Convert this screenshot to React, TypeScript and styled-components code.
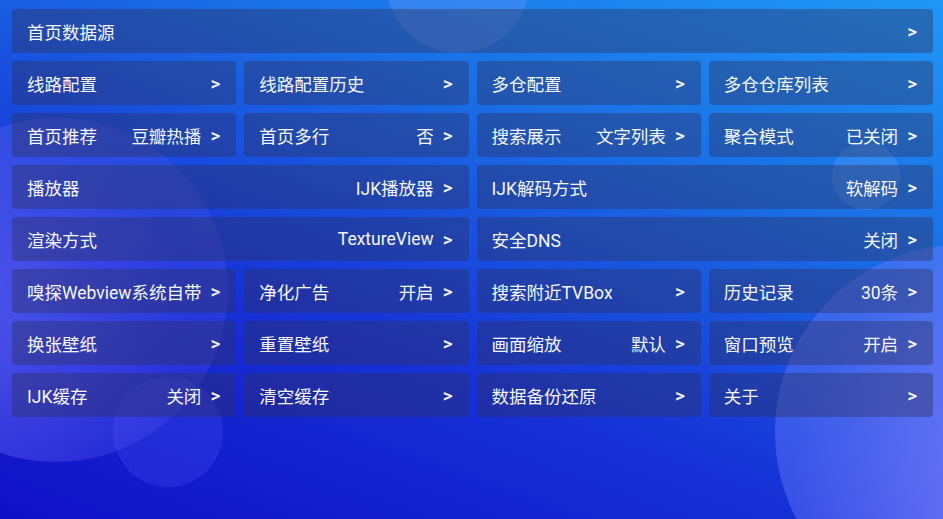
import React from 'react';
import styled, { createGlobalStyle } from 'styled-components';

interface Item {
    label: string;
    value?: string;
    span?: number;
}

const items: Item[] = [
    { label: '首页数据源', span: 4 },
    { label: '线路配置' },
    { label: '线路配置历史' },
    { label: '多仓配置' },
    { label: '多仓仓库列表' },
    { label: '首页推荐', value: '豆瓣热播' },
    { label: '首页多行', value: '否' },
    { label: '搜索展示', value: '文字列表' },
    { label: '聚合模式', value: '已关闭' },
    { label: '播放器', value: 'IJK播放器', span: 2 },
    { label: 'IJK解码方式', value: '软解码', span: 2 },
    { label: '渲染方式', value: 'TextureView', span: 2 },
    { label: '安全DNS', value: '关闭', span: 2 },
    { label: '嗅探Webview系统自带' },
    { label: '净化广告', value: '开启' },
    { label: '搜索附近TVBox' },
    { label: '历史记录', value: '30条' },
    { label: '换张壁纸' },
    { label: '重置壁纸' },
    { label: '画面缩放', value: '默认' },
    { label: '窗口预览', value: '开启' },
    { label: 'IJK缓存', value: '关闭' },
    { label: '清空缓存' },
    { label: '数据备份还原' },
    { label: '关于' },
];

const GlobalStyle = createGlobalStyle`
    html, body {
        margin: 0;
        padding: 0;
        overflow: hidden;
    }
    body {
        font-family: Roboto, "Noto Sans CJK SC", sans-serif;
    }
`;

const Screen = styled.div`
    position: relative;
    width: 943px;
    height: 519px;
    overflow: hidden;
    background: linear-gradient(200deg, #1f98f6 0%, #1a6fe6 30%, #1630d6 65%, #1010c6 100%);
`;

// decorative circles painted behind the menu
const Bubble = styled.div<{ $x: number; $y: number; $r: number; $bg: string }>`
    position: absolute;
    left: ${(p) => p.$x - p.$r}px;
    top: ${(p) => p.$y - p.$r}px;
    width: ${(p) => p.$r * 2}px;
    height: ${(p) => p.$r * 2}px;
    border-radius: 50%;
    background: ${(p) => p.$bg};
    pointer-events: none;
`;

const Grid = styled.div`
    position: relative;
    display: grid;
    grid-template-columns: repeat(4, 1fr);
    grid-auto-rows: 44px;
    gap: 8px;
    padding: 9px 10px 0 12px;
`;

const Tile = styled.div<{ $span: number }>`
    grid-column: span ${(p) => p.$span};
    display: flex;
    align-items: center;
    padding: 0 16px 0 15px;
    border-radius: 4px;
    background: rgba(48, 48, 92, 0.4);
    color: #f4f6fc;
    font-size: 17.5px;
    white-space: nowrap;
`;

const Label = styled.span`
    flex: 1;
`;

const Value = styled.span`
    margin-right: 9px;
`;

const Arrow = styled.span`
    font-size: 19px;
    font-weight: 500;
    line-height: 1;
`;

export default function App() {
    return (
        <>
            <GlobalStyle />
            <Screen>
                <Bubble $x={458} $y={-19} $r={72} $bg="rgba(120, 160, 255, 0.28)" />
                <Bubble
                    $x={56}
                    $y={290}
                    $r={172}
                    $bg="radial-gradient(circle at 20% 55%, rgba(120, 120, 255, 0.6), rgba(90, 90, 240, 0.25) 70%)"
                />
                <Bubble $x={168} $y={432} $r={55} $bg="rgba(90, 90, 255, 0.22)" />
                <Bubble $x={866} $y={176} $r={34} $bg="rgba(140, 180, 255, 0.2)" />
                <Bubble
                    $x={962}
                    $y={432}
                    $r={187}
                    $bg="radial-gradient(circle at 85% 65%, rgba(145, 135, 255, 0.9), rgba(100, 120, 250, 0.45) 75%)"
                />
                <Grid>
                    {items.map((item) => (
                        <Tile key={item.label} $span={item.span ?? 1}>
                            <Label>{item.label}</Label>
                            {item.value && <Value>{item.value}</Value>}
                            <Arrow>&gt;</Arrow>
                        </Tile>
                    ))}
                </Grid>
            </Screen>
        </>
    );
}
